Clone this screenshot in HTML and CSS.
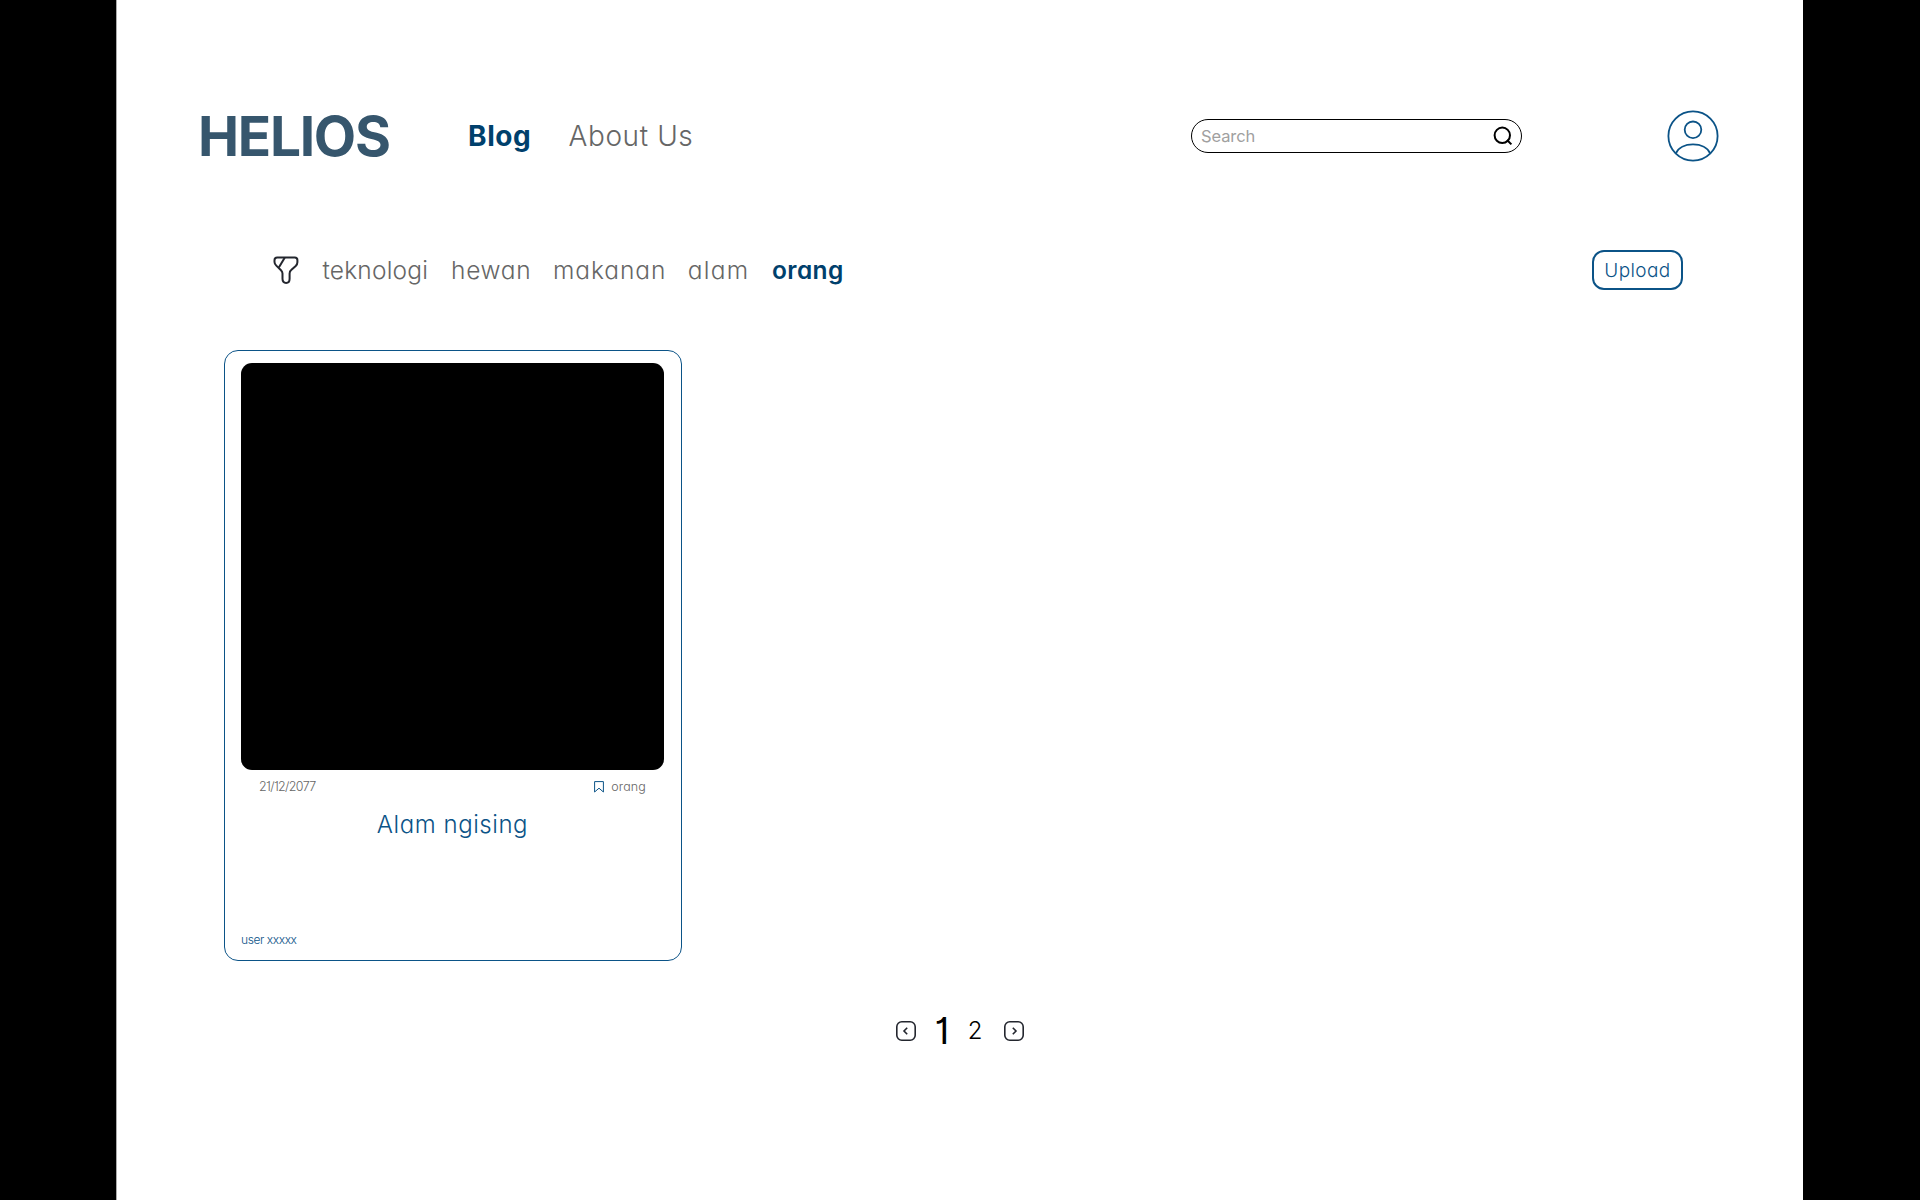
FILE: index.html
```
<!DOCTYPE html>
<html lang="id">
<head>
<meta charset="utf-8">
<title>Helios</title>
<link rel="stylesheet" href="styles.css">
</head>
<body>
<div class="page">
  <header class="topbar">
    <a class="logo">HELIOS</a>
    <nav class="nav">
      <a class="nav-link blog active">Blog</a>
      <a class="nav-link about">About Us</a>
    </nav>
    <label class="search">
      <span class="search-text">Search</span>
      <svg class="search-icon" width="20" height="20" viewBox="0 0 20 20"><circle cx="9.3" cy="9.3" r="7.7"/><path d="M14 14l4.4 4.4"/></svg>
    </label>
    <svg class="avatar" width="52" height="52" viewBox="0 0 52 52"><circle cx="26" cy="26" r="24.6"/><circle cx="26" cy="19.8" r="8.3"/><path d="M8.9 43.4C11.2 37.6 18 34.3 26 34.3s14.8 3.3 17.1 9.1"/></svg>
  </header>
  <section class="filters">
    <svg class="funnel" width="26" height="28" viewBox="0 0 26 28"><path d="M4.2 1.5h17.6c1.5 0 2.6 1.1 2.6 2.6v2.2c0 1.4-.8 2.8-1.7 3.7l-4.5 4.1c-1.1.9-1.6 2.2-1.6 3.4v5.2c0 2.3-1.3 4.2-3.5 4.2s-3.6-1.8-3.6-4.1v-5.3c0-1.2-.6-2.4-1.5-3.3L3.3 9.6C2.2 8.5 1.5 7.3 1.5 6V4.2c0-1.6 1.2-2.7 2.7-2.7z"/><path d="M11.7 1.7L5.8 11.6"/></svg>
    <a class="tag teknologi">teknologi</a>
    <a class="tag hewan">hewan</a>
    <a class="tag makanan">makanan</a>
    <a class="tag alam">alam</a>
    <a class="tag orang active">orang</a>
    <a class="upload">Upload</a>
  </section>
  <main class="grid">
    <article class="card">
      <div class="photo"></div>
      <div class="meta">
        <span class="date">21/12/2077</span>
        <svg class="bookmark" width="10" height="12" viewBox="0 0 10 12"><path d="M.6.6h8.800v10.400L5 7.200.6 11z"/></svg>
        <span class="category">orang</span>
      </div>
      <h2 class="title">Alam ngising</h2>
      <div class="author">user xxxxx</div>
    </article>
  </main>
  <nav class="pager">
    <svg class="arrow" width="20" height="20" viewBox="0 0 20 20"><rect x=".8" y=".8" width="18.4" height="18.4" rx="5"/><path d="M11.2 6.7L8 10l3.2 3.3"/></svg>
    <span class="current">1</span>
    <span class="other">2</span>
    <svg class="arrow" width="20" height="20" viewBox="0 0 20 20"><rect x=".8" y=".8" width="18.4" height="18.4" rx="5"/><path d="M8.8 6.7L12 10l-3.2 3.3"/></svg>
  </nav>
</div>
</body>
</html>
```
FILE: styles.css
```
* { box-sizing: border-box; }
body {
  margin: 0;
  background: #000;
  font-family: "Inter", sans-serif;
  font-weight: 300;
  font-feature-settings: "cv11", "cv01";
}
a, span { white-space: nowrap; }
.page {
  width: 1687px;
  height: 1200px;
  margin-left: 116px;
  padding-top: 110px;
  background: #fff;
  border-left: 1px solid #aaa;
}

/* Header */
.topbar { display: flex; align-items: center; height: 52px; padding-left: 81px; }
.logo { width: 270px; font-size: 55px; line-height: 52px; letter-spacing: -1.3px; font-weight: 700; color: #36566d; }
.nav { display: flex; width: 723px; }
.nav-link { font-size: 28px; line-height: 50px; letter-spacing: .6px; color: #666; }
.blog { width: 100.5px; }
.active { font-weight: 700; color: #00406c; }
.search {
  display: flex;
  align-items: center;
  justify-content: space-between;
  width: 330.5px;
  height: 34px;
  padding: 0 8px 0 9px;
  border: 1.5px solid #000;
  border-radius: 17px;
}
.search-text { font-size: 16.5px; font-weight: 400; letter-spacing: -.1px; color: #a0a0a0; font-feature-settings: normal; }
.search-icon { fill: none; stroke: #000; stroke-width: 2; }
.avatar { margin-left: 145px; fill: none; stroke: #0b5387; stroke-width: 1.8; }

/* Category filters */
.filters { display: flex; align-items: center; margin-top: 87px; height: 42px; padding-left: 155.5px; }
.funnel { fill: none; stroke: #23262e; stroke-width: 2; margin-right: 24px; }
.tag { font-size: 24.5px; color: #666; }
.tag.active { color: #00406c; font-weight: 600; }
.teknologi { width: 128.5px; letter-spacing: .2px; }
.hewan { width: 101.9px; letter-spacing: .7px; }
.makanan { width: 134.8px; letter-spacing: .95px; }
.alam { width: 84.3px; letter-spacing: 1.3px; }
.orang { letter-spacing: .4px; }
.upload {
  width: 91px;
  height: 40px;
  margin-left: auto;
  margin-right: 120px;
  border: 2px solid #0b5387;
  border-radius: 12px;
  color: #0b5387;
  font-size: 19px;
  line-height: 38px;
  letter-spacing: .4px;
  text-align: center;
}

/* Posts */
.grid { padding: 59px 0 0 107px; }
.card {
  display: flex;
  flex-direction: column;
  width: 458px;
  height: 611px;
  padding: 12px 17px 12px 16px;
  border: 1px solid #0b5387;
  border-radius: 14px;
  color: #0b5387;
}
.photo { height: 407px; background: #000; border-radius: 11px; }
.meta { display: flex; align-items: center; padding: 9px 18px 0 18px; font-size: 12.5px; line-height: 15px; color: #666; }
.date { letter-spacing: -.65px; }
.bookmark { margin-left: auto; margin-right: 7px; fill: none; stroke: #0b5387; }
.category { letter-spacing: .15px; }
.title { margin: 16px 0 0; text-align: center; font-size: 24px; line-height: 29px; letter-spacing: .55px; font-weight: 300; }
.author { margin-top: auto; padding-bottom: 1px; font-size: 12px; letter-spacing: -.42px; }

/* Pagination */
.pager { display: flex; align-items: center; justify-content: center; margin-top: 47px; }
.arrow { fill: none; stroke: #23262e; stroke-width: 1.6; }
.current { margin: 0 18.5px; font-size: 37px; line-height: 45px; font-weight: 400; }
.other { margin-right: 21.5px; font-size: 24px; }
```
